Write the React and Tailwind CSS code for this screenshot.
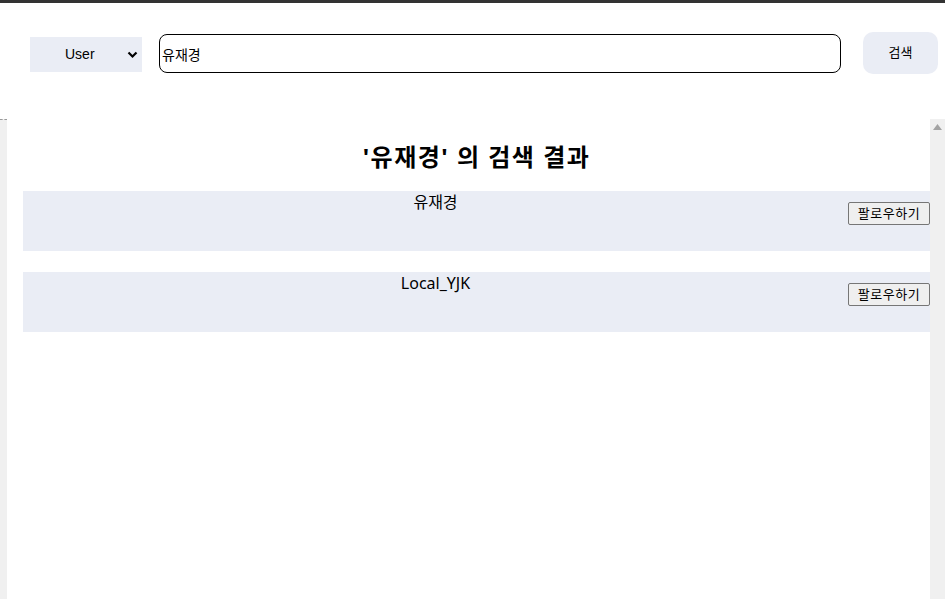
import { useState } from "react";

const results = [
  { id: 1, name: "유재경" },
  { id: 2, name: "Local_YJK" },
];

const font = { fontFamily: '"Noto Sans", "Noto Sans CJK KR", sans-serif' };

const ResultRow = ({ name }) => (
  <div className="flex items-start h-[60px] ml-4 bg-[#eaedf5]">
    <div className="flex-1 text-center text-[16px] leading-[20px] pt-[1px] text-black">
      {name}
    </div>
    <button className="mt-[11px] w-[82px] h-[23px] border border-[#767676] rounded-[2px] bg-[#efefef] text-[13px] leading-none tracking-[0.5px] text-black">
      팔로우하기
    </button>
  </div>
);

export default function App() {
  const [query, setQuery] = useState("유재경");
  const [type, setType] = useState("User");

  return (
    <div className="w-[945px] h-[599px] flex flex-col bg-white overflow-hidden" style={font}>
      <div className="h-[3px] bg-[#333333]" />

      {/* search bar */}
      <div className="h-[116px] flex items-start pt-[29px] pl-[30px]">
        <div className="relative mt-[5px]">
          <select
            value={type}
            onChange={(e) => setType(e.target.value)}
            className="appearance-none w-[112px] h-[35px] bg-[#eaedf5] text-[14px] text-black pl-[35px] pr-4 outline-none"
            style={{ fontFamily: '"Liberation Sans", Arial, sans-serif' }}
          >
            <option>User</option>
            <option>Post</option>
          </select>
          <svg
            className="absolute right-[4px] top-[14px] pointer-events-none"
            width="11"
            height="8"
            viewBox="0 0 11 8"
          >
            <path d="M1.5 1.5 L5.5 5.5 L9.5 1.5" stroke="#000" strokeWidth="2.2" fill="none" />
          </svg>
        </div>
        <input
          value={query}
          onChange={(e) => setQuery(e.target.value)}
          className="ml-[17px] mt-[2px] w-[682px] h-[39px] border border-black rounded-[8px] px-[2px] text-[14px] text-black outline-none"
        />
        <button className="ml-[22px] w-[75px] h-[42px] rounded-[10px] bg-[#eaedf5] text-[13px] text-black">
          검색
        </button>
      </div>

      <div className="flex-1 flex">
        <div className="w-[7px] bg-[#f0f0f0]">
          <div className="h-[1px] w-[7px] border-t border-dashed border-[#999]" />
        </div>

        <main className="flex-1 pt-[22px]">
          <h2 className="text-center text-[24px] font-bold leading-[32px] tracking-[1.5px] text-black ml-4">
            '{query}' 의 검색 결과
          </h2>
          <div className="mt-[18px] flex flex-col gap-[21px]">
            {results.map((r) => (
              <ResultRow key={r.id} name={r.name} />
            ))}
          </div>
        </main>

        <div className="w-[15px] bg-[#f0f0f0] flex justify-center pt-[5px]">
          <svg width="9" height="6" viewBox="0 0 9 6">
            <path d="M4.5 0 L9 6 L0 6 Z" fill="#a3a3a3" />
          </svg>
        </div>
      </div>
    </div>
  );
}
